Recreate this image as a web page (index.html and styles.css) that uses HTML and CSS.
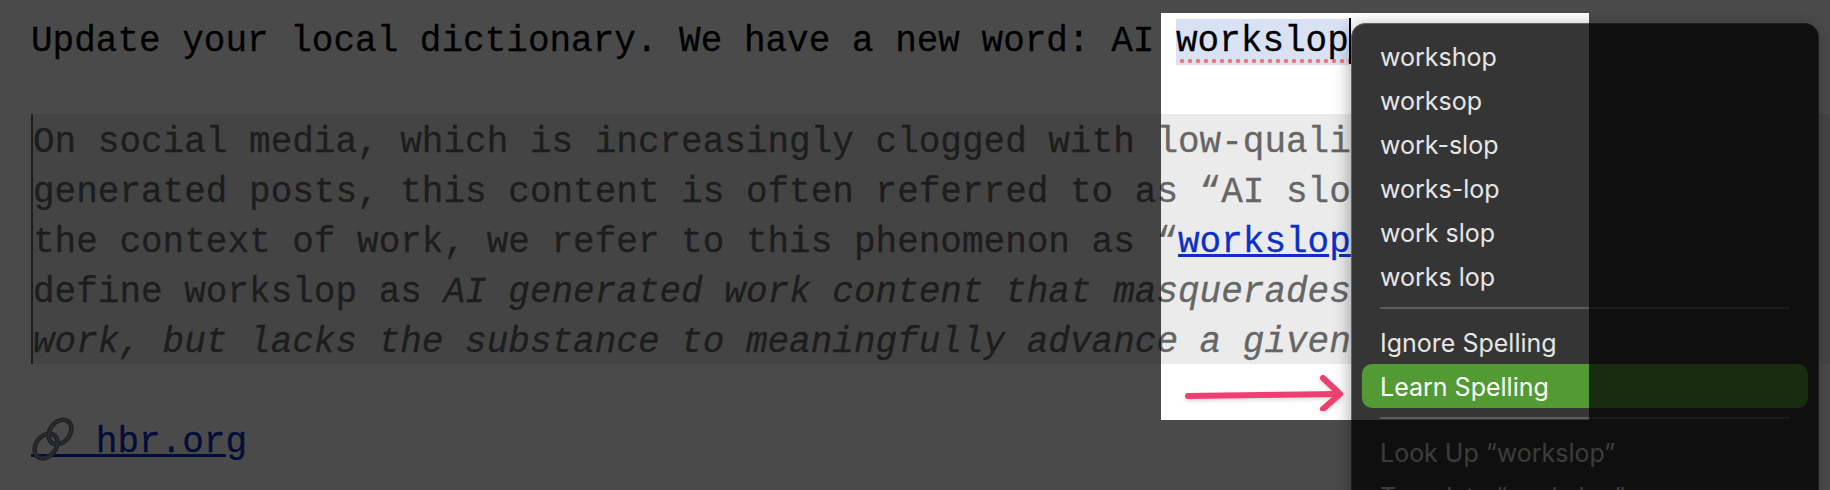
FILE: index.html
```html
<!DOCTYPE html>
<html lang="en">
<head>
    <meta charset="UTF-8">
    <meta name="viewport" content="width=device-width, initial-scale=1.0">
    <title>Learn Spelling</title>
    <link rel="stylesheet" href="styles.css">
</head>
<body>
<div class="note">
    <p class="headline">Update your local dictionary. We have a new word: AI <span class="misspelled">workslop</span><span class="caret"></span></p>
    <blockquote class="quote">
        On social media, which is increasingly clogged with low-quality AI-<br>
        generated posts, this content is often referred to as “AI slop.” In<br>
        the context of work, we refer to this phenomenon as “<a href="#">workslop</a>.” We<br>
        define workslop as <em>AI generated work content that masquerades as good</em><br>
        <em>work, but lacks the substance to meaningfully advance a given task.</em>
    </blockquote>
    <p class="source"><a href="#"><svg class="chain" viewBox="0 0 43 44" fill="none"><g stroke="#6f747c" stroke-width="4.5"><ellipse cx="15" cy="29" rx="10" ry="13.5" transform="rotate(38 15 29)"/><ellipse cx="29" cy="15" rx="10" ry="13.5" transform="rotate(38 29 15)"/></g><g stroke="#a3b0bd" stroke-width="1"><ellipse cx="15" cy="29" rx="10" ry="13.5" transform="rotate(38 15 29)"/><ellipse cx="29" cy="15" rx="10" ry="13.5" transform="rotate(38 29 15)"/></g></svg>&nbsp;&nbsp;&nbsp;hbr.org</a></p>
</div>

<!-- context menu -->
<div class="menu">
    <div class="menu-item">workshop</div>
    <div class="menu-item">worksop</div>
    <div class="menu-item">work-slop</div>
    <div class="menu-item">works-lop</div>
    <div class="menu-item">work slop</div>
    <div class="menu-item">works lop</div>
    <div class="menu-sep"></div>
    <div class="menu-item">Ignore Spelling</div>
    <div class="menu-item active">Learn Spelling</div>
    <div class="menu-sep"></div>
    <div class="menu-item disabled">Look Up “workslop”</div>
    <div class="menu-item disabled">Translate “workslop”</div>
</div>

<!-- bright window cut out of the dimmed screen -->
<div class="spotlight">
    <svg class="arrow" viewBox="0 0 165 36" fill="none"><path d="M5 21 L155 19" stroke="#ee3f70" stroke-width="6" stroke-linecap="round"/><path d="M140 3 L157 19 L140 34" stroke="#ee3f70" stroke-width="6" stroke-linecap="round" stroke-linejoin="round"/></svg>
</div>
</body>
</html>
```
FILE: styles.css
```css
html, body {
    height: 100%;
    margin: 0;
}
body {
    background-color: white;
    overflow: hidden;
    position: relative;
    font-family: "Liberation Mono", monospace;
    font-size: 36px;
    line-height: 50px;
    color: black;
}
.note {
    padding: 17px 0 0 31px;
    white-space: nowrap;
    -webkit-text-stroke: 0.3px;
}
.headline {
    margin: 0 0 47px;
}
.misspelled {
    background-color: #d9e2f5;
    background-image: radial-gradient(circle, #ee7a78 2px, transparent 2.4px);
    background-size: 8px 6px;
    background-position: 2px 39px;
    background-repeat: repeat-x;
    display: inline-block;
    line-height: 46px;
    height: 46px;
    vertical-align: baseline;
}
.caret {
    display: inline-block;
    width: 2px;
    height: 46px;
    background-color: black;
    vertical-align: -13px;
}
.quote {
    margin: 0;
    height: 250px;
    box-sizing: border-box;
    padding: 4px 0 0 0;
    border-left: 2px solid #666;
    background-color: #ebebeb;
    color: #666;
}
.quote a {
    color: #0b2fc8;
}
.source {
    margin: 54px 0 0;
}
.source a {
    position: relative;
    color: #0b2fc8;
    text-decoration-thickness: 3px;
    text-underline-offset: 2px;
}
.chain {
    position: absolute;
    left: 0;
    top: -5px;
    width: 43px;
    height: 44px;
}
.menu {
    position: absolute;
    left: 1351px;
    top: 23px;
    width: 468px;
    height: 520px;
    box-sizing: border-box;
    padding: 10px;
    background-color: #353535;
    border: 1px solid #636363;
    border-radius: 14px;
    box-shadow: -2px 2px 16px rgba(0, 0, 0, 0.3);
    font-family: Inter, sans-serif;
    font-size: 25px;
    color: #e6e6e6;
}
.menu-item {
    height: 44px;
    line-height: 46px;
    padding: 0 18px;
    border-radius: 10px;
}
.menu-item.active {
    background-color: #539a35;
    color: white;
}
.menu-item.disabled {
    color: #cfcfcf;
}
.menu-sep {
    height: 2px;
    margin: 9px 18px 11px;
    background-color: #5c5c5c;
}
.spotlight {
    position: absolute;
    left: 1161px;
    top: 13px;
    width: 428px;
    height: 407px;
    box-shadow: 0 0 0 2400px rgba(0, 0, 0, 0.71);
}
.arrow {
    position: absolute;
    left: 22px;
    top: 362px;
    width: 165px;
    height: 36px;
    filter: drop-shadow(0 2px 2px rgba(0, 0, 0, 0.15));
}
```
